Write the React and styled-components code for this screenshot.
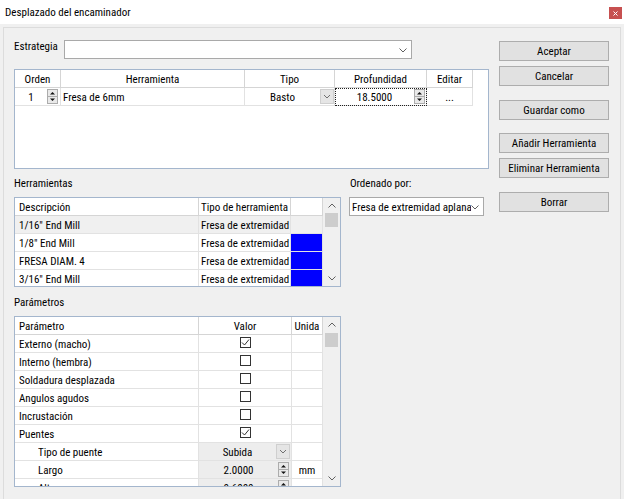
import React from 'react';
import styled, { createGlobalStyle } from 'styled-components';

const GlobalStyle = createGlobalStyle`
  html, body {
    margin: 0;
    padding: 0;
  }
  body {
    background: #f0f0f0;
    font-family: "Roboto Condensed", Carlito, "Liberation Sans", sans-serif;
    font-size: 11px;
    color: #000;
  }
  * {
    box-sizing: border-box;
  }
`;

const Window = styled.div`
  width: 624px;
  height: 499px;
  display: flex;
  flex-direction: column;
  background: #f0f0f0;
  overflow: hidden;
`;

const TitleBar = styled.div`
  height: 24px;
  flex: none;
  background: #fff;
  display: flex;
  align-items: center;
  justify-content: space-between;
  padding: 0 2px 0 5px;
`;

const CloseBox = styled.div`
  width: 13px;
  height: 12px;
  margin-top: 2px;
  background: #c75050;
  display: flex;
  align-items: center;
  justify-content: center;
`;

const Panel = styled.div`
  flex: 1;
  width: 618px;
  margin: 3px 0 0 3px;
  border: 1px solid #dcdcdc;
  border-bottom: none;
  display: flex;
  gap: 10px;
  padding: 12px 0 0 10px;
`;

const LeftCol = styled.div`
  width: 475px;
  flex: none;
  display: flex;
  flex-direction: column;
`;

const RightCol = styled.div`
  width: 110px;
  flex: none;
  display: flex;
  flex-direction: column;
`;

const StrategyRow = styled.div`
  display: flex;
  align-items: flex-start;
  height: 19px;
`;

const FieldLabel = styled.div`
  width: ${(p) => p.$width || 'auto'};
  line-height: 14px;
  flex: none;
  white-space: nowrap;
`;

const Combo = styled.div`
  width: ${(p) => p.$width}px;
  height: 19px;
  flex: none;
  background: #fff;
  border: 1px solid #a9a9a9;
  display: flex;
  align-items: center;
  padding: 1px 4px 0 2px;
  overflow: hidden;
`;

const ComboText = styled.span`
  flex: 1;
  overflow: hidden;
  white-space: nowrap;
`;

const GridBox = styled.div`
  height: ${(p) => p.$height}px;
  width: ${(p) => p.$width}px;
  flex: none;
  border: 1px solid #a4b6cd;
  background: #fff;
  display: flex;
  margin-top: ${(p) => p.$top || 0}px;
`;

const GridBody = styled.div`
  flex: 1;
  display: flex;
  flex-direction: column;
  overflow: hidden;
`;

const GridRow = styled.div`
  display: grid;
  grid-template-columns: ${(p) => p.$cols};
  height: 18px;
  flex: none;
`;

const HeadCell = styled.div`
  display: flex;
  align-items: center;
  justify-content: ${(p) => (p.$left ? 'flex-start' : 'center')};
  padding: 1px 0 0 ${(p) => (p.$left ? p.$pad ?? 4 : 0)}px;
  border-right: 1px solid #d5d5d5;
  border-bottom: 1px solid #d5d5d5;
  background: #fff;
  white-space: nowrap;
  overflow: hidden;
`;

const Cell = styled.div`
  display: flex;
  align-items: center;
  padding: 1px 0 0 ${(p) => p.$pad ?? 4}px;
  border-right: 1px solid #e2e2e2;
  border-bottom: 1px solid #e2e2e2;
  background: ${(p) => p.$bg || '#fff'};
  white-space: nowrap;
  overflow: hidden;
  ${(p) => (p.$focus ? 'outline: 1px dotted #202020; outline-offset: -1px;' : '')}
`;

const CellText = styled.span`
  flex: 1;
  text-align: ${(p) => p.$align || 'left'};
  overflow: hidden;
`;

const Scroll = styled.div`
  width: 17px;
  flex: none;
  background: #f0f0f0;
  display: flex;
  flex-direction: column;
  align-items: center;
`;

const ScrollArrow = styled.div`
  height: ${(p) => p.$h}px;
  width: 100%;
  display: flex;
  align-items: center;
  justify-content: center;
  margin-top: ${(p) => (p.$bottom ? 'auto' : '0')};
`;

const Thumb = styled.div`
  width: 13px;
  height: 14px;
  margin-top: ${(p) => p.$gap || 0}px;
  background: #cdcdcd;
`;

const SmallBtn = styled.div`
  width: ${(p) => p.$w}px;
  height: 15px;
  flex: none;
  margin: -1px ${(p) => p.$mr || 0}px 0 0;
  display: flex;
  align-items: center;
  justify-content: center;
`;

const MiddleRow = styled.div`
  display: flex;
  gap: 8px;
`;

const Section = styled.div`
  display: flex;
  flex-direction: column;
`;

const SectionLabel = styled.div`
  line-height: 14px;
  margin: ${(p) => p.$top ?? 8}px 0 6px ${(p) => p.$left || 0}px;
`;

const Button = styled.button`
  height: 20px;
  width: 110px;
  margin-top: ${(p) => p.$top}px;
  padding: 0;
  border: 1px solid #adadad;
  background: #e1e1e1;
  font: inherit;
  color: #000;
`;

const Chevron = ({ up }) => (
  <svg width="8" height="5" viewBox="0 0 8 5">
    <polyline
      points={up ? '0.5,4.5 4,1 7.5,4.5' : '0.5,0.5 4,4 7.5,0.5'}
      fill="none"
      stroke="#606060"
      strokeWidth="1"
    />
  </svg>
);

const Spinner = ({ mr = 1 }) => (
  <SmallBtn $w={11} $mr={mr}>
    <svg width="11" height="15" viewBox="0 0 11 15">
      <rect x="0.5" y="0.5" width="10" height="14" fill="#e9e9e9" stroke="#acacac" />
      <line x1="0.5" y1="7.5" x2="10.5" y2="7.5" stroke="#acacac" />
      <polygon points="3,5.5 8,5.5 5.5,3" fill="#111" />
      <polygon points="3,9.5 8,9.5 5.5,12" fill="#111" />
    </svg>
  </SmallBtn>
);

const DropBtn = ({ mr = 1 }) => (
  <SmallBtn $w={14} $mr={mr}>
    <svg width="14" height="15" viewBox="0 0 14 15">
      <rect x="0.5" y="0.5" width="13" height="14" fill="#e5e5e5" stroke="#cfcfcf" />
      <polyline points="4,6 7,9 10,6" fill="none" stroke="#707070" />
    </svg>
  </SmallBtn>
);

const Check = ({ on }) => (
  <svg width="11" height="11" viewBox="0 0 11 11">
    <rect x="0.5" y="0.5" width="10" height="10" fill="#fff" stroke="#333" />
    {on && <polyline points="2,5.5 4.5,8 9,2.5" fill="none" stroke="#333" />}
  </svg>
);

const ScrollBar = ({ upH, thumbGap, downH }) => (
  <Scroll>
    <ScrollArrow $h={upH}>
      <Chevron up />
    </ScrollArrow>
    <Thumb $gap={thumbGap} />
    <ScrollArrow $h={downH} $bottom>
      <Chevron />
    </ScrollArrow>
  </Scroll>
);

const topCols = '46px 184px 90px 92px 46px';
const toolCols = '184px 92px 32px';
const paramCols = '184px 93px 31px';

const tools = [
  { name: '1/16" End Mill', color: null, selected: true },
  { name: '1/8" End Mill', color: '#0000ff' },
  { name: 'FRESA DIAM. 4', color: '#0000ff' },
  { name: '3/16" End Mill', color: '#0000ff' },
];

const params = [
  { name: 'Externo (macho)', check: true },
  { name: 'Interno (hembra)', check: false },
  { name: 'Soldadura desplazada', check: false },
  { name: 'Angulos agudos', check: false },
  { name: 'Incrustación', check: false },
  { name: 'Puentes', check: true },
  { name: 'Tipo de puente', sub: true, value: 'Subida', kind: 'drop' },
  { name: 'Largo', sub: true, value: '2.0000', kind: 'spin', unit: 'mm' },
  { name: 'Alto', sub: true, value: '0.6000', kind: 'spin', unit: 'mm' },
];

const App = () => (
  <Window>
    <GlobalStyle />
    <TitleBar>
      <span>Desplazado del encaminador</span>
      <CloseBox>
        <svg width="5" height="5" viewBox="0 0 5 5">
          <path d="M0.5 0.5 L4.5 4.5 M4.5 0.5 L0.5 4.5" stroke="#fff" strokeWidth="1" />
        </svg>
      </CloseBox>
    </TitleBar>
    <Panel>
      <LeftCol>
        <StrategyRow>
          <FieldLabel $width="50px">Estrategia</FieldLabel>
          <Combo $width={348}>
            <ComboText />
            <Chevron />
          </Combo>
        </StrategyRow>

        <GridBox $height={100} $width={475} $top={10}>
          <GridBody>
            <GridRow $cols={topCols}>
              <HeadCell>Orden</HeadCell>
              <HeadCell>Herramienta</HeadCell>
              <HeadCell>Tipo</HeadCell>
              <HeadCell>Profundidad</HeadCell>
              <HeadCell>Editar</HeadCell>
            </GridRow>
            <GridRow $cols={topCols}>
              <Cell $pad={0}>
                <CellText $align="center">1</CellText>
                <Spinner mr={2} />
              </Cell>
              <Cell $pad={2}>
                <CellText>Fresa de 6mm</CellText>
              </Cell>
              <Cell $pad={0}>
                <CellText $align="center">Basto</CellText>
                <DropBtn mr={0} />
              </Cell>
              <Cell $pad={0} $focus>
                <CellText $align="center">18.5000</CellText>
                <Spinner mr={1} />
              </Cell>
              <Cell $pad={0}>
                <CellText $align="center">...</CellText>
              </Cell>
            </GridRow>
          </GridBody>
        </GridBox>

        <MiddleRow>
          <Section>
            <SectionLabel>Herramientas</SectionLabel>
            <GridBox $height={90} $width={327}>
              <GridBody>
                <GridRow $cols={toolCols}>
                  <HeadCell $left>Descripción</HeadCell>
                  <HeadCell $left $pad={2}>Tipo de herramienta</HeadCell>
                  <HeadCell />
                </GridRow>
                {tools.map((t) => (
                  <GridRow $cols={toolCols} key={t.name}>
                    <Cell $bg={t.selected ? '#f0f0f0' : '#fff'}>
                      <CellText>{t.name}</CellText>
                    </Cell>
                    <Cell $pad={2} $bg={t.selected ? '#f0f0f0' : '#fff'}>
                      <CellText>Fresa de extremidad</CellText>
                    </Cell>
                    <Cell $bg={t.color || '#f0f0f0'} />
                  </GridRow>
                ))}
              </GridBody>
              <ScrollBar upH={15} thumbGap={0} downH={16} />
            </GridBox>
          </Section>
          <Section>
            <SectionLabel $left={1}>Ordenado por:</SectionLabel>
            <Combo $width={135}>
              <ComboText>Fresa de extremidad aplanada</ComboText>
              <Chevron />
            </Combo>
          </Section>
        </MiddleRow>

        <Section>
          <SectionLabel $top={9}>Parámetros</SectionLabel>
          <GridBox $height={171} $width={327}>
            <GridBody>
              <GridRow $cols={paramCols}>
                <HeadCell $left>Parámetro</HeadCell>
                <HeadCell>Valor</HeadCell>
                <HeadCell>Unida</HeadCell>
              </GridRow>
              {params.map((p) => (
                <GridRow $cols={paramCols} key={p.name}>
                  <Cell $pad={p.sub ? 23 : 4}>
                    <CellText>{p.name}</CellText>
                  </Cell>
                  {p.kind ? (
                    <Cell $pad={0} $bg="#ededed">
                      <CellText $align="center">{p.value}</CellText>
                      {p.kind === 'drop' ? <DropBtn mr={1} /> : <Spinner mr={2} />}
                    </Cell>
                  ) : (
                    <Cell $pad={0}>
                      <CellText $align="center">
                        <Check on={p.check} />
                      </CellText>
                    </Cell>
                  )}
                  <Cell $pad={0}>
                    <CellText $align="center">{p.unit || ''}</CellText>
                  </Cell>
                </GridRow>
              ))}
            </GridBody>
            <ScrollBar upH={15} thumbGap={1} downH={16} />
          </GridBox>
        </Section>
      </LeftCol>

      <RightCol>
        <Button $top={1}>Aceptar</Button>
        <Button $top={5}>Cancelar</Button>
        <Button $top={14}>Guardar como</Button>
        <Button $top={13}>Añadir Herramienta</Button>
        <Button $top={5}>Eliminar Herramienta</Button>
        <Button $top={14}>Borrar</Button>
      </RightCol>
    </Panel>
  </Window>
);

export default App;
